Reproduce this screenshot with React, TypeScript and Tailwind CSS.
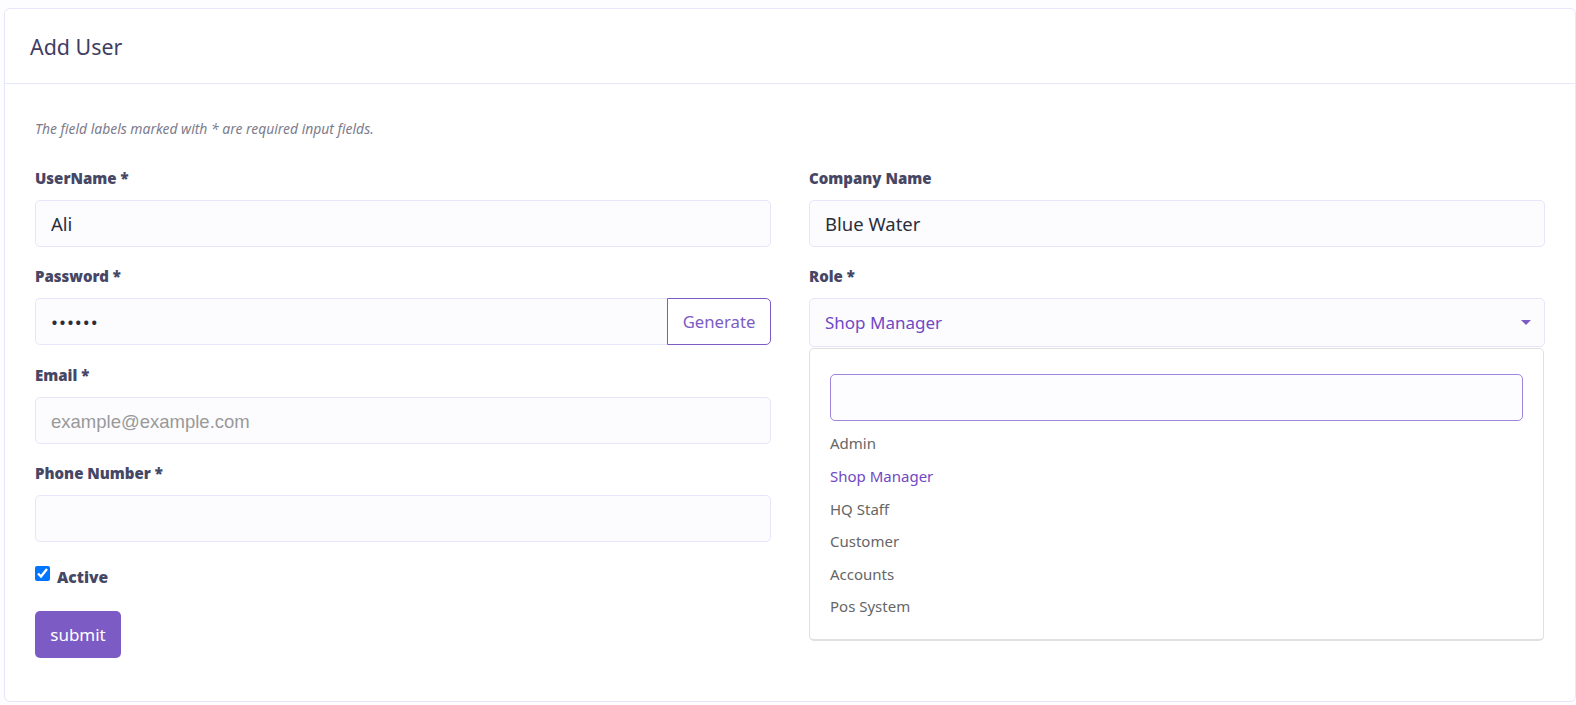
import { useState } from "react";

const font = "font-['Noto_Sans','Open_Sans',sans-serif]";
const inputClass =
  "h-[47px] w-full rounded-[5px] border border-[#e6e6fa] bg-[#fcfcff] px-[15px] text-[18.5px] text-[#2b2e3a] outline-none";
const labelClass = "mb-[11px] block h-[22px] text-[15px] leading-[22px] font-black text-[#464665]";
const roles = ["Admin", "Shop Manager", "HQ Staff", "Customer", "Accounts", "Pos System"];

function Field({ label, children }: { label: string; children: React.ReactNode }) {
  return (
    <div className="mb-[18.33px]">
      <label className={labelClass}>{label}</label>
      {children}
    </div>
  );
}

export default function App() {
  const [active, setActive] = useState(true);

  return (
    <div className={`h-[705px] overflow-hidden bg-[#fdfdff] pt-2 pl-1 ${font}`}>
      <div className="h-[694px] rounded-[6px] border border-[#e6e6fa] bg-white">
        <div className="flex h-[75px] items-center border-b border-[#e6e6fa] px-[25px] pt-[3px]">
          <h1 className="text-[21.4px] font-normal text-[#3f3d63]">Add User</h1>
        </div>
        <div className="px-[30px] pt-[35px]">
          <p className="mb-[28px] h-[20px] text-[13.9px] leading-[20px] text-[#7c7c8c] italic">
            The field labels marked with * are required input fields.
          </p>
          <div className="grid grid-cols-2 gap-x-[38px]">
            <div>
              <Field label="UserName *">
                <input className={inputClass} defaultValue="Ali" />
              </Field>
              <Field label="Password *">
                <div className="flex">
                  <input
                    type="password"
                    className={`${inputClass} rounded-r-none border-r-0 tracking-[1px]`}
                    defaultValue="123456"
                  />
                  <button className="h-[47px] w-[104px] shrink-0 rounded-r-[5px] border border-[#7c5cc4] bg-white text-[16.7px] text-[#7c5cc4]">
                    Generate
                  </button>
                </div>
              </Field>
              <Field label="Email *">
                <input
                  className={`${inputClass} pt-[4px] font-['Liberation_Sans',sans-serif] text-[17.2px] placeholder:text-[#999999]`}
                  placeholder="example@example.com"
                />
              </Field>
              <Field label="Phone Number *">
                <input className={inputClass} />
              </Field>
              <div className="mt-[24px] mb-[23px] flex h-[22px] items-center">
                <input
                  type="checkbox"
                  checked={active}
                  onChange={(e) => setActive(e.target.checked)}
                  className="m-0 mr-[7px] mb-[6px] h-[15px] w-[15px]"
                />
                <span className="pt-[2px] text-[15.6px] font-black text-[#464665]">Active</span>
              </div>
              <button className="h-[47px] w-[86px] rounded-[5px] bg-[#7c5cc4] text-[17px] text-white">
                submit
              </button>
            </div>
            <div>
              <Field label="Company Name">
                <input className={inputClass} defaultValue="Blue Water" />
              </Field>
              <label className={labelClass}>Role *</label>
              <div className="flex h-[49px] w-full items-center justify-between rounded-[5px] border border-[#e6e6fa] bg-[#fcfcff] pr-[13px] pl-[15px] text-[17px] text-[#7048c4]">
                <span>Shop Manager</span>
                <span className="h-0 w-0 border-x-[5px] border-t-[5px] border-x-transparent border-t-[#7c5cc4]" />
              </div>
              <div className="mt-[1px] h-[293px] w-[735px] rounded-[5px] border border-b-2 border-[#e0e0e4] bg-white px-[20px] pt-[25px]">
                <input className="h-[47px] w-full rounded-[5px] border border-[#a184dc] bg-[#fdfdff] outline-none" />
                <ul className="mt-[6px]">
                  {roles.map((role) => (
                    <li
                      key={role}
                      className={`h-[32.6px] text-[15px] leading-[32.6px] ${
                        role === "Shop Manager" ? "text-[#7048c4]" : "text-[#666666]"
                      }`}
                    >
                      {role}
                    </li>
                  ))}
                </ul>
              </div>
            </div>
          </div>
        </div>
      </div>
    </div>
  );
}
